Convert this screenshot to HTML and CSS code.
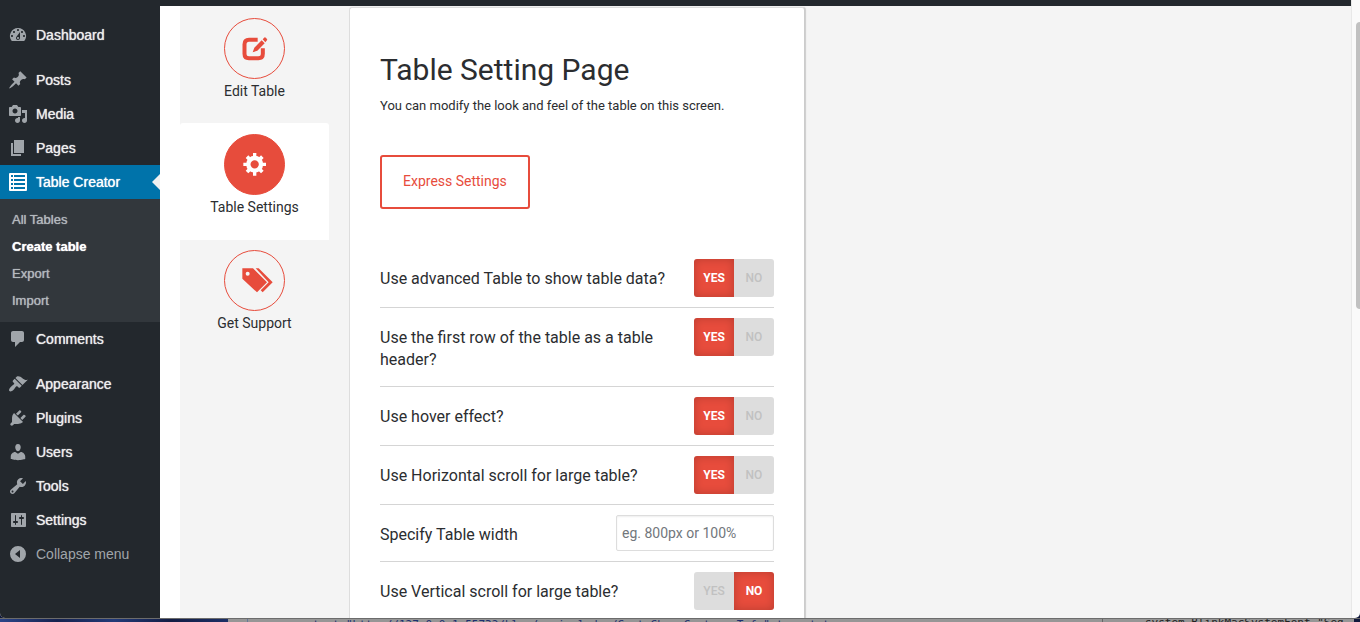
FILE: index.html
```html
<!DOCTYPE html>
<html lang="en">
<head>
<meta charset="utf-8">
<title>Table Creator</title>
<link rel="stylesheet" href="styles.css">
</head>
<body>
<div class="window">
  <div class="viewport">
    <div class="adminbar"></div>
    <div class="admin">
      <nav class="menu" aria-label="Admin menu">
        <ul class="menu-list">
          <li><a class="menu-item" href="#"><svg class="icon" viewBox="0 0 20 20"><path d="M3.76 16h12.48A7.998 7.998 0 0 0 10 3a7.998 7.998 0 0 0-6.24 13zM10 4c.55 0 1 .45 1 1s-.45 1-1 1-1-.45-1-1 .45-1 1-1zM6 6c.55 0 1 .45 1 1s-.45 1-1 1-1-.45-1-1 .45-1 1-1zm8 0c.55 0 1 .45 1 1s-.45 1-1 1-1-.45-1-1 .45-1 1-1zm-5.37 5.55L12 7v6c0 1.1-.9 2-2 2s-2-.9-2-2c0-.57.24-1.08.63-1.45zM4 10c.55 0 1 .45 1 1s-.45 1-1 1-1-.45-1-1 .45-1 1-1zm12 0c.55 0 1 .45 1 1s-.45 1-1 1-1-.45-1-1 .45-1 1-1zm-5 3c0-.55-.45-1-1-1s-1 .45-1 1 .45 1 1 1 1-.45 1-1z"/></svg>Dashboard</a></li>
          <li class="group-start"><a class="menu-item" href="#"><svg class="icon" viewBox="0 0 20 20"><path d="M10.44 3.02l1.82-1.82 6.36 6.35-1.83 1.82c-1.05-.68-2.48-.57-3.41.36l-.75.75c-.92.93-1.04 2.35-.35 3.41l-1.83 1.82-2.41-2.41-2.8 2.79c-.42.42-3.38 2.71-3.8 2.29s1.86-3.39 2.28-3.81l2.79-2.79L4.1 9.36l1.83-1.82c1.05.69 2.48.57 3.4-.36l.75-.75c.93-.92 1.05-2.35.36-3.41z"/></svg>Posts</a></li>
          <li><a class="menu-item" href="#"><svg class="icon" viewBox="0 0 20 20"><path d="M13 11V4c0-.55-.45-1-1-1h-1.67L9 1H5L3.67 3H2c-.55 0-1 .45-1 1v7c0 .55.45 1 1 1h10c.55 0 1-.45 1-1zM7 4.5c1.38 0 2.5 1.12 2.5 2.5S8.38 9.5 7 9.5 4.5 8.38 4.5 7 5.62 4.5 7 4.5zM14 6h5v10.5c0 1.38-1.12 2.5-2.5 2.5S14 17.88 14 16.5s1.12-2.5 2.5-2.5c.17 0 .34.02.5.05V9h-3V6zm-4 8.05V13h2v3.5c0 1.38-1.12 2.5-2.5 2.5S7 17.88 7 16.5 8.12 14 9.5 14c.17 0 .34.02.5.05z"/></svg>Media</a></li>
          <li><a class="menu-item" href="#"><svg class="icon" viewBox="0 0 20 20"><path d="M6 15V2h10v13H6zm-1 1h8v2H3V5h2v11z"/></svg>Pages</a></li>
          <li>
            <a class="menu-item current" href="#"><svg class="icon" viewBox="0 0 20 20"><path fill-rule="evenodd" d="M2 1h16q1 0 1 1v16q0 1-1 1H2q-1 0-1-1V2q0-1 1-1zM3 3v2h2V3zM6 3v2h11V3zM3 7v2h2V7zM6 7v2h11V7zM3 11v2h2v-2zM6 11v2h11v-2zM3 15v2h2v-2zM6 15v2h11v-2z"/></svg>Table Creator</a>
            <ul class="submenu">
              <li><a class="submenu-item" href="#">All Tables</a></li>
              <li><a class="submenu-item selected" href="#">Create table</a></li>
              <li><a class="submenu-item" href="#">Export</a></li>
              <li><a class="submenu-item" href="#">Import</a></li>
            </ul>
          </li>
          <li><a class="menu-item" href="#"><svg class="icon" viewBox="0 0 20 20"><path d="M5 2h9c1.1 0 2 .9 2 2v7c0 1.1-.9 2-2 2h-2l-5 5v-5H5c-1.1 0-2-.9-2-2V4c0-1.1.9-2 2-2z"/></svg>Comments</a></li>
          <li class="group-start"><a class="menu-item" href="#"><svg class="icon" viewBox="0 0 20 20"><path d="M14.48 11.06L7.41 3.99l1.5-1.5c.5-.56 2.3-.47 3.51.32 1.21.8 1.43 1.28 2.91 2.1 1.18.64 2.45 1.26 4.45.85zm-.71.71L6.7 4.7 4.93 6.47c-.39.39-.39 1.02 0 1.41l1.06 1.06c.39.39.39 1.03 0 1.42-.6.6-1.43 1.11-2.21 1.69-.35.26-.7.53-1.01.84C1.43 14.23.4 16.08 1.4 17.07c.99 1 2.84-.03 4.18-1.36.31-.31.58-.66.85-1.02.57-.78 1.08-1.61 1.69-2.21.39-.39 1.02-.39 1.41 0l1.06 1.06c.39.39 1.02.39 1.41 0z"/></svg>Appearance</a></li>
          <li><a class="menu-item" href="#"><svg class="icon" viewBox="0 0 20 20"><path d="M13.11 4.36L9.87 7.6 8 5.73l3.24-3.24c.35-.34 1.05-.2 1.56.32.52.51.66 1.21.31 1.55zm-8 1.77l.91-1.12 9.01 9.01-1.19.84c-.71.71-2.63 1.16-3.82 1.16H6.14L4.9 17.26c-.59.59-1.54.59-2.12 0-.59-.58-.59-1.53 0-2.12l1.24-1.24v-3.88c0-1.13.4-3.19 1.09-3.89zm7.26 3.97l3.24-3.24c.34-.35 1.04-.21 1.55.31.52.51.66 1.21.31 1.55l-3.24 3.25z"/></svg>Plugins</a></li>
          <li><a class="menu-item" href="#"><svg class="icon" viewBox="0 0 20 20"><path d="M10 9.25c-2.27 0-2.73-3.44-2.73-3.44C7 4.02 7.82 2 9.97 2c2.16 0 2.98 2.02 2.71 3.81 0 0-.41 3.44-2.68 3.44zm0 2.57L12.72 10c2.39 0 4.52 2.33 4.52 4.53v2.49s-3.65 1.13-7.24 1.13c-3.65 0-7.24-1.13-7.24-1.13v-2.49c0-2.25 1.94-4.48 4.47-4.48z"/></svg>Users</a></li>
          <li><a class="menu-item" href="#"><svg class="icon" viewBox="0 0 20 20"><path d="M16.68 9.77c-1.34 1.34-3.3 1.67-4.95.99l-5.41 6.52c-.99.99-2.59.99-3.58 0s-.99-2.59 0-3.57l6.52-5.42c-.68-1.65-.35-3.61.99-4.95 1.28-1.28 3.12-1.62 4.72-1.06l-2.89 2.89 2.82 2.82 2.86-2.87c.53 1.58.18 3.39-1.08 4.65zM3.81 16.21c.4.39 1.04.39 1.43 0 .4-.4.4-1.04 0-1.43-.39-.4-1.03-.4-1.43 0-.39.39-.39 1.03 0 1.43z"/></svg>Tools</a></li>
          <li><a class="menu-item" href="#"><svg class="icon" viewBox="0 0 20 20"><path fill-rule="evenodd" d="M18 16V4c0-.55-.45-1-1-1H4c-.55 0-1 .45-1 1v12c0 .55.45 1 1 1h13c.55 0 1-.45 1-1zM8 11h1c.55 0 1 .45 1 1s-.45 1-1 1H8v1.5c0 .28-.22.5-.5.5s-.5-.22-.5-.5V13H6c-.55 0-1-.45-1-1s.45-1 1-1h1V5.5c0-.28.22-.5.5-.5s.5.22.5.5V11zm5-2h-1c-.55 0-1-.45-1-1s.45-1 1-1h1V5.5c0-.28.22-.5.5-.5s.5.22.5.5V7h1c.55 0 1 .45 1 1s-.45 1-1 1h-1v5.5c0 .28-.22.5-.5.5s-.5-.22-.5-.5V9z"/></svg>Settings</a></li>
          <li><button class="menu-item collapse" type="button"><svg class="icon" viewBox="0 0 20 20"><path fill-rule="evenodd" d="M10 2a8 8 0 1 1 0 16a8 8 0 0 1 0-16zM12 6l-5 4 5 4z"/></svg>Collapse menu</button></li>
        </ul>
      </nav>
      <main class="workspace">
        <nav class="steps" aria-label="Table steps">
          <a class="step" href="#"><span class="badge"><svg class="step-icon" viewBox="0 0 84 84"><path d="M50 14.500H24Q10.500 14.500 10.500 28V56Q10.500 69.500 24 69.500H52Q65.500 69.500 65.500 56V40" fill="none" stroke="currentColor" stroke-width="12"/><path d="M35 52l5-14 22-22 9 9-22 22zM65 13l6-6q4 0 8 7l-6 8z" stroke="none"/></svg></span>Edit Table</a>
          <a class="step active" href="#"><span class="badge"><svg class="step-icon" viewBox="0 0 84 84"><g fill="none" stroke="currentColor" transform="translate(-1 -2)"><circle cx="42" cy="42" r="19" stroke-width="13"/><path stroke-width="10" d="M42 8v12M42 64v12M8 42h12M64 42h12"/><path stroke-width="11" d="M19 19l8 8M57 57l8 8M65 19l-8 8M27 57l-8 8"/></g></svg></span>Table Settings</a>
          <a class="step" href="#"><span class="badge"><svg class="step-icon tags" viewBox="0 0 96 84"><path fill-rule="evenodd" d="M10 4h32l42 42-30 30L10 35zM26 14a6 6 0 1 0 0 12a6 6 0 1 0 0-12z"/><path d="M50 4h9l42 42-30 30-6-6 24-24z"/></svg></span>Get Support</a>
        </nav>
        <section class="panel">
          <h1 class="title">Table Setting Page</h1>
          <p class="intro">You can modify the look and feel of the table on this screen.</p>
          <button class="express" type="button">Express Settings</button>
          <form class="settings">
            <div class="row" role="radiogroup" aria-labelledby="q1">
              <span class="label" id="q1">Use advanced Table to show table data?</span>
              <span class="toggle"><label class="option"><input type="radio" name="advanced" checked>YES</label><label class="option"><input type="radio" name="advanced">NO</label></span>
            </div>
            <div class="row" role="radiogroup" aria-labelledby="q2">
              <span class="label" id="q2">Use the first row of the table as a table header?</span>
              <span class="toggle"><label class="option"><input type="radio" name="header" checked>YES</label><label class="option"><input type="radio" name="header">NO</label></span>
            </div>
            <div class="row" role="radiogroup" aria-labelledby="q3">
              <span class="label" id="q3">Use hover effect?</span>
              <span class="toggle"><label class="option"><input type="radio" name="hover" checked>YES</label><label class="option"><input type="radio" name="hover">NO</label></span>
            </div>
            <div class="row" role="radiogroup" aria-labelledby="q4">
              <span class="label" id="q4">Use Horizontal scroll for large table?</span>
              <span class="toggle"><label class="option"><input type="radio" name="hscroll" checked>YES</label><label class="option"><input type="radio" name="hscroll">NO</label></span>
            </div>
            <div class="row">
              <label class="label" for="width">Specify Table width</label>
              <input class="field" id="width" type="text" placeholder="eg. 800px or 100%">
            </div>
            <div class="row" role="radiogroup" aria-labelledby="q5">
              <span class="label" id="q5">Use Vertical scroll for large table?</span>
              <span class="toggle"><label class="option"><input type="radio" name="vscroll">YES</label><label class="option"><input type="radio" name="vscroll" checked>NO</label></span>
            </div>
          </form>
        </section>
      </main>
    </div>
  </div>
  <div class="scrollbar"><div class="thumb"></div></div>
</div>
<div class="behind">
  <div class="desktop"></div>
  <div class="code">content="http://127.0.0.1:55732/blog/wp-includes/CertsCheerCustoms.Tofu" target t</div>
  <div class="styles-pane">system,BlinkMacSystemFont,"Seg</div>
  <div class="desktop-edge"></div>
</div>
</body>
</html>
```
FILE: styles.css
```css
* {
  box-sizing: border-box;
}

body {
  margin: 0;
  height: 100vh;
  display: flex;
  flex-direction: column;
  overflow: hidden;
  background: #10183c;
  color: #2b2d30;
  font-family: Roboto, sans-serif;
}

ul {
  list-style: none;
  margin: 0;
  padding: 0;
}

a {
  color: inherit;
  text-decoration: none;
}

svg {
  fill: currentColor;
}

.window {
  flex: 1;
  min-height: 0;
  display: flex;
  overflow: hidden;
  border-radius: 0 0 5px 5px;
}

.viewport {
  flex: 1;
  min-width: 0;
  display: flex;
  flex-direction: column;
  background: #f4f4f4;
}

.adminbar {
  flex: none;
  height: 6px;
  background: #23282d;
}

.admin {
  flex: 1;
  min-height: 0;
  display: flex;
}

/* Admin menu */

.menu {
  flex: none;
  width: 160px;
  padding-top: 12px;
  background: #23282d;
  color: #eee;
  font-family: "Liberation Sans", sans-serif;
}

.menu-item {
  position: relative;
  display: flex;
  align-items: center;
  gap: 8px;
  width: 100%;
  height: 34px;
  padding: 0 8px;
  font-size: 14px;
  line-height: 18px;
  text-shadow: 0 0 1px currentColor;
}

.icon {
  flex: none;
  width: 20px;
  height: 20px;
  color: #a0a5aa;
}

.group-start {
  margin-top: 11px;
}

.current,
.current .icon {
  color: #fff;
}

.current {
  background: #0073aa;
}

.current::after {
  content: "";
  position: absolute;
  right: 0;
  top: 9px;
  border: 8px solid transparent;
  border-left: 0;
  border-right-color: #f1f1f1;
}

.submenu {
  padding: 7px 0 8px;
  background: #32373c;
}

.submenu-item {
  display: block;
  padding: 0 12px;
  color: #b4b9be;
  font-size: 13px;
  line-height: 27px;
  text-shadow: 0 0 1px currentColor;
}

.selected {
  color: #fff;
  font-weight: bold;
}

.collapse {
  border: 0;
  background: none;
  color: #a0a5aa;
  font-family: inherit;
  text-shadow: none;
}

/* Workspace */

.workspace {
  flex: 1;
  min-width: 0;
  display: flex;
  align-items: stretch;
  border-left: 20px solid #fff;
}

.steps {
  flex: none;
  width: 149px;
  margin-right: 20px;
  padding-top: 2px;
}

.step {
  display: flex;
  flex-direction: column;
  align-items: center;
  height: 116px;
  padding-top: 10px;
  gap: 2px;
  font-size: 14px;
  line-height: 20px;
}

.active {
  background: #fff;
  border-radius: 3px 3px 0 0;
  box-shadow: 0 -1px 0 #fff;
}

.badge {
  flex: none;
  display: flex;
  align-items: center;
  justify-content: center;
  width: 61px;
  height: 61px;
  border: 1px solid #e74c3c;
  border-radius: 50%;
  color: #e74c3c;
}

.active .badge {
  background: #e74c3c;
  color: #fff;
}

.step-icon {
  width: 28px;
  height: 28px;
}

.tags {
  width: 32px;
  overflow: visible;
}

.panel {
  width: 456px;
  height: max-content;
  margin-top: 1px;
  padding: 44px 30px 30px;
  background: #fff;
  border: 1px solid #ddd;
  border-right-color: #ccc;
  border-radius: 3px 3px 0 0;
  box-shadow: 1px 0 1px #ccc;
}

.title {
  margin: 0;
  font-size: 30px;
  font-weight: 400;
  line-height: 36px;
}

.intro {
  margin: 8px 0 39px;
  font-size: 13px;
  line-height: 20px;
}

.express {
  display: block;
  height: 54px;
  padding: 0 21px 2px;
  border: 2px solid #e74c3c;
  border-radius: 3px;
  background: #fff;
  color: #e74c3c;
  font-family: inherit;
  font-size: 14px;
}

.settings {
  margin-top: 40px;
}

.row {
  display: flex;
  align-items: flex-start;
  justify-content: space-between;
  gap: 20px;
  padding: 10px 0;
  border-bottom: 1px solid #d5d5d5;
}

.label {
  padding: 9px 0 5px;
  font-size: 16px;
  line-height: 22px;
}

.toggle {
  flex: none;
  display: flex;
  height: 38px;
  overflow: hidden;
  border-radius: 3px;
}

.option {
  display: flex;
  align-items: center;
  justify-content: center;
  width: 40px;
  background: #ddd;
  color: #c1c1c1;
  font-size: 12px;
  font-weight: 500;
}

.option input {
  appearance: none;
  position: absolute;
  margin: 0;
}

.option:has(:checked) {
  background: #e74c3c;
  box-shadow: inset 0 0 10px rgba(0, 0, 0, 0.2);
  color: #fff;
  font-weight: 700;
}

.field {
  width: 158px;
  height: 36px;
  padding: 0 5px;
  border: 1px solid #ddd;
  border-radius: 2px;
  box-shadow: inset 0 1px 2px rgba(0, 0, 0, 0.07);
  font-family: inherit;
  font-size: 14px;
}

.field::placeholder {
  color: #72777c;
}

/* Scrollbar */

.scrollbar {
  flex: none;
  width: 9px;
  padding: 22px 0 0 4px;
  background: #fafafa;
  border-left: 1px solid #e8e8e8;
}

.thumb {
  height: 287px;
  background: #c1c1c1;
  border-radius: 4px 0 0 4px;
}

/* Windows behind the browser */

.behind {
  flex: none;
  display: flex;
  height: 4px;
  overflow: hidden;
  background: #969696;
  border-top: 1px solid #6c6c6c;
  color: #222;
  font-family: "DejaVu Sans Mono", monospace;
  font-size: 11px;
  line-height: 12px;
  white-space: nowrap;
}

.desktop {
  width: 228px;
  background: linear-gradient(90deg, #2b4488, #16234f 25%, #223a78 50%, #131d44 75%, #1c2f66);
}

.code {
  flex: 1;
  min-width: 0;
  margin-left: 19px;
  padding-left: 45px;
  overflow: hidden;
  border-left: 1px solid #66779a;
  color: #1d2f6f;
}

.styles-pane {
  width: 252px;
  padding-left: 42px;
  overflow: hidden;
  border-left: 1px solid #666;
  line-height: 7px;
}

.desktop-edge {
  width: 6px;
  background: #10183c;
}
```
